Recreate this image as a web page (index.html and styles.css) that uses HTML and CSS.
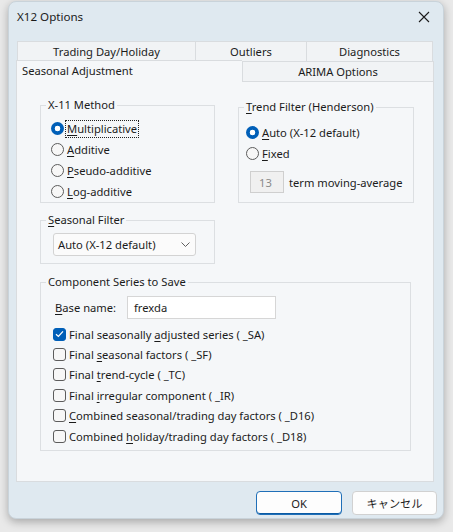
FILE: index.html
```html
<!DOCTYPE html>
<html>
<head>
<meta charset="utf-8">
<title>X12 Options</title>
<link rel="stylesheet" href="styles.css">
</head>
<body>
<div class="dialog">
  <div class="titlebar">
    <span class="title">X12 Options</span>
    <span class="close"><svg width="12" height="12" viewBox="0 0 12 12"><path d="M1 1 L11 11 M11 1 L1 11" stroke="#1b1b1b" stroke-width="1.1" fill="none"/></svg></span>
  </div>
  <div class="tabs">
    <div class="tabrow row1">
      <div class="tab t-td">Trading Day/Holiday</div>
      <div class="tab t-out">Outliers</div>
      <div class="tab t-diag last">Diagnostics</div>
    </div>
    <div class="tabrow row2">
      <div class="tab sel">Seasonal Adjustment</div>
      <div class="tab t-arima last">ARIMA Options</div>
    </div>
    <div class="panel">
      <div class="top-grid">
        <div class="col">
          <fieldset class="grp x11">
            <legend>X-11 Method</legend>
            <div class="inner">
              <div class="opt"><span class="radio on"></span><span class="lbl focus"><u>M</u>ultiplicative</span></div>
              <div class="opt"><span class="radio"></span><span class="lbl"><u>A</u>dditive</span></div>
              <div class="opt"><span class="radio"></span><span class="lbl"><u>P</u>seudo-additive</span></div>
              <div class="opt"><span class="radio"></span><span class="lbl"><u>L</u>og-additive</span></div>
            </div>
          </fieldset>
          <fieldset class="grp sf">
            <legend><u>S</u>easonal Filter</legend>
            <div class="inner">
              <div class="select"><span>Auto (X-12 default)</span><svg width="9" height="5" viewBox="0 0 9 5"><path d="M0.5 0.5 L4.5 4.5 L8.5 0.5" stroke="#5f5f5f" stroke-width="1" fill="none"/></svg></div>
            </div>
          </fieldset>
        </div>
        <fieldset class="grp trend">
          <legend><u>T</u>rend Filter (Henderson)</legend>
          <div class="inner">
            <div class="opt"><span class="radio on"></span><span class="lbl"><u>A</u>uto (X-12 default)</span></div>
            <div class="opt"><span class="radio"></span><span class="lbl"><u>F</u>ixed</span></div>
            <div class="termrow"><span class="numbox">13</span><span class="term">term moving-average</span></div>
          </div>
        </fieldset>
      </div>
      <fieldset class="grp comp">
        <legend>Component Series to Save</legend>
        <div class="inner">
          <div class="baserow"><span class="baselbl"><u>B</u>ase name:</span><span class="textbox">frexda</span></div>
          <div class="chk"><span class="box on"><svg width="9" height="8" viewBox="0 0 9 8"><path d="M1 4.2 L3.4 6.4 L8 1.4" stroke="#fff" stroke-width="1.3" fill="none"/></svg></span><span>Final seasonally <u>a</u>djusted series ( _SA)</span></div>
          <div class="chk"><span class="box"></span><span>Final <u>s</u>easonal factors ( _SF)</span></div>
          <div class="chk"><span class="box"></span><span>Final <u>t</u>rend-cycle ( _TC)</span></div>
          <div class="chk"><span class="box"></span><span>Final <u>i</u>rregular component ( _IR)</span></div>
          <div class="chk"><span class="box"></span><span><u>C</u>ombined seasonal/trading day factors ( _D16)</span></div>
          <div class="chk"><span class="box"></span><span>Combined <u>h</u>oliday/trading day factors ( _D18)</span></div>
        </div>
      </fieldset>
    </div>
  </div>
  <div class="buttons">
    <div class="btn default">OK</div>
    <div class="btn">キャンセル</div>
  </div>
</div>
</body>
</html>
```

FILE: styles.css
```css
* { box-sizing: border-box; }
html, body { margin: 0; padding: 0; }
body {
  width: 453px;
  height: 532px;
  background: #e9e9e9;
  font-family: "Noto Sans", "Noto Sans CJK JP", sans-serif;
  font-size: 11.2px;
  color: #1b1b1b;
  overflow: hidden;
  padding: 1px 0 0 8px;
}
u { text-decoration-thickness: 1px; text-underline-offset: 2px; }

.dialog {
  width: 436px;
  height: 518px;
  background: #dfe9f0;
  border: 1px solid #c9d3da;
  border-radius: 8px;
  box-shadow: 0 3px 9px rgba(0,0,0,0.28);
  display: flex;
  flex-direction: column;
}
.titlebar {
  height: 31px;
  display: flex;
  align-items: center;
  justify-content: space-between;
  padding: 0 13px 2px 8px;
}
.title { font-size: 11.6px; }
.close { display: flex; }

.tabs { margin: 8px 0 0 7px; width: 418px; }
.tabrow { display: flex; }
.row1 { margin-left: 1px; height: 20px; }
.row2 { height: 20px; position: relative; z-index: 2; }
.tab {
  height: 20px;
  border: 1px solid #d9dcdf;
  border-right: none;
  border-bottom: none;
  background: #f1f3f5;
  display: flex;
  align-items: center;
  justify-content: center;
  line-height: 16px;
}
.tab.last { border-right: 1px solid #d9dcdf; }
.t-td { width: 178px; }
.t-out { width: 111px; }
.t-diag { width: 127px; }
.t-arima { width: 192px; }
.tab.sel {
  width: 226px;
  height: 22px;
  margin-top: -1px;
  background: #f5f7f9;
  justify-content: flex-start;
  padding-left: 5px;
  padding-bottom: 2px;
}

.panel {
  height: 401px;
  background: #f5f7f9;
  border: 1px solid #d9dcdf;
  padding: 15px 0 0 23px;
}
.top-grid {
  display: grid;
  grid-template-columns: 175px 176px;
  column-gap: 23px;
  align-items: start;
}
.col { display: flex; flex-direction: column; gap: 9px; }

.grp {
  margin: 0;
  padding: 0;
  border: 1px solid #dcdfe2;
  min-width: 0;
}
.grp legend {
  padding: 0 2px;
  margin-left: 5px;
  line-height: 16px;
  height: 16px;
}
.x11 .inner { padding: 5px 0 0 10px; }
.trend { margin-top: 2px; }
.trend .inner { padding: 7px 0 9px 7px; }
.sf .inner { padding: 5px 0 7px 12px; }
.comp { width: 371px; margin-top: 10px; }
.comp .inner { padding: 6px 0 4px 12px; }

.opt { height: 21px; display: flex; align-items: center; }
.radio {
  width: 13px; height: 13px;
  border-radius: 50%;
  border: 1px solid #5c5c5c;
  background: #f7f7f7;
  margin-right: 2px;
  flex: none;
}
.radio.on {
  border: none;
  background: radial-gradient(circle, #ffffff 0 2.6px, #005fb8 3.1px);
}
.lbl { line-height: 16px; padding: 0 1px; }
.focus { outline: 1px dotted #222; outline-offset: 0; }

.termrow { display: flex; align-items: center; margin-top: 7px; padding-left: 4px; }
.numbox {
  width: 34px; height: 22px;
  border: 1px solid #cfcfcf;
  background: #f0f0f0;
  color: #8a8a8a;
  display: flex; align-items: center;
  padding-left: 8px;
}
.term { margin-left: 5px; }

.select {
  width: 143px; height: 23px;
  background: #fbfbfb;
  border: 1px solid #d3d3d3;
  border-radius: 3px;
  display: flex; align-items: center; justify-content: space-between;
  padding: 0 5px 0 4px;
}

.baserow { display: flex; align-items: center; height: 23px; margin-bottom: 5px; }
.baselbl { width: 74px; padding-left: 2px; }
.textbox {
  width: 149px; height: 23px;
  background: #ffffff;
  border: 1px solid #d6d6d6;
  display: flex; align-items: center;
  padding-left: 6px;
}
.chk { height: 20.4px; display: flex; align-items: center; }
.box {
  width: 13px; height: 13px;
  border: 1px solid #5c5c5c;
  border-radius: 3px;
  background: #f7f7f7;
  margin-right: 3px;
  flex: none;
  display: flex; align-items: center; justify-content: center;
}
.box.on { background: #005fb8; border-color: #005fb8; }

.buttons {
  display: flex;
  justify-content: flex-end;
  gap: 10px;
  margin-top: 9px;
  padding-right: 6px;
}
.btn {
  width: 85px; height: 24px;
  border: 1px solid #d1d1d1;
  border-radius: 4px;
  background: #fdfdfd;
  display: flex; align-items: center; justify-content: center;
}
.btn.default { width: 86px; border-color: #1f6fb8; box-shadow: inset 0 -1px 0 #0a5aa3; }
```
